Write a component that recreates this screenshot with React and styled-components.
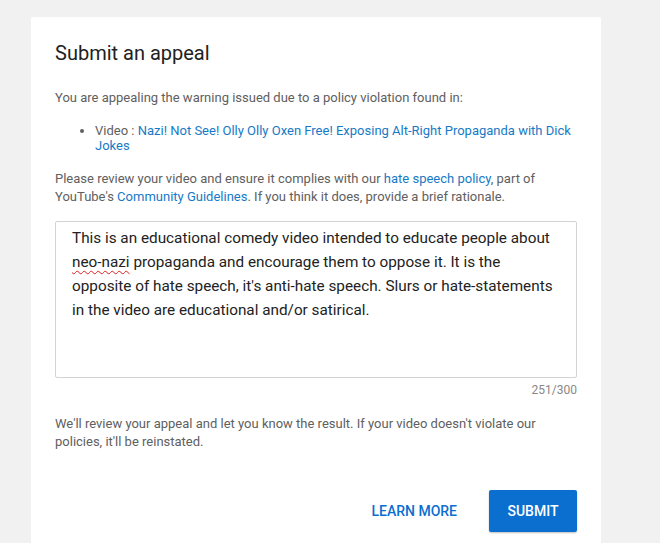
import React from "react";
import styled, { createGlobalStyle } from "styled-components";

const Global = createGlobalStyle`
  html, body { margin: 0; padding: 0; background: #f1f1f1; }
  body { font-family: Roboto, "Noto Sans", Arial, sans-serif; }
`;

const Page = styled.div`
  padding: 17px 59px 0 31px;
  min-height: 543px;
  box-sizing: border-box;
`;

const Card = styled.div`
  width: 570px;
  box-sizing: border-box;
  background: #fff;
  border-radius: 2px 2px 0 0;
  padding: 24px 24px 40px;
`;

const Title = styled.h2`
  margin: 0;
  font-size: 20px;
  line-height: 24px;
  font-weight: 400;
  color: #212121;
`;

const Para = styled.p`
  margin: ${(p) => p.$mt || 0}px 0 0;
  font-size: 13px;
  line-height: 18px;
  color: #606060;
`;

const List = styled.ul`
  margin: 16px 0 0;
  padding-left: 40px;
  font-size: 13px;
  line-height: 15px;
  color: #606060;
  li::marker { color: #606060; }
`;

const Link = styled.a`
  color: #167ac6;
  text-decoration: none;
`;

const Field = styled.div`
  margin-top: 15px;
  height: 157px;
  box-sizing: border-box;
  border: 1px solid #d3d3d3;
  border-radius: 2px;
  padding: 4px 16px;
  font-size: 15.3px;
  line-height: 24px;
  color: #222;
`;

const Misspelled = styled.span`
  text-decoration: underline wavy #e02020;
  text-decoration-thickness: 1px;
  text-underline-offset: 3px;
`;

const Counter = styled.div`
  margin-top: 4px;
  text-align: right;
  font-size: 12px;
  line-height: 16px;
  color: #888;
`;

const Actions = styled.div`
  margin-top: 39px;
  display: flex;
  justify-content: flex-end;
  align-items: center;
  gap: 16px;
`;

const Button = styled.button`
  height: 42px;
  min-width: 88px;
  padding: 0 ${(p) => (p.$primary ? 18 : 16)}px;
  border: none;
  border-radius: 2px;
  font-family: Roboto, "Noto Sans", Arial, sans-serif;
  font-size: 14px;
  font-weight: 500;
  letter-spacing: 0;
  text-transform: uppercase;
  cursor: pointer;
  background: ${(p) => (p.$primary ? "#0b6fd0" : "transparent")};
  color: ${(p) => (p.$primary ? "#fff" : "#0b6fd0")};
  box-shadow: ${(p) => (p.$primary ? "0 1px 2px rgba(0,0,0,0.25)" : "none")};
`;

export default function App() {
  return (
    <>
      <Global />
      <Page>
        <Card>
          <Title>Submit an appeal</Title>
          <Para $mt={24}>
            You are appealing the warning issued due to a policy violation found in:
          </Para>
          <List>
            <li>
              Video :{" "}
              <Link href="#">
                Nazi! Not See! Olly Olly Oxen Free! Exposing Alt-Right Propaganda with Dick Jokes
              </Link>
            </li>
          </List>
          <Para $mt={17}>
            Please review your video and ensure it complies with our{" "}
            <Link href="#">hate speech policy</Link>, part of YouTube's{" "}
            <Link href="#">Community Guidelines</Link>. If you think it does, provide a brief
            rationale.
          </Para>
          <Field>
            This is an educational comedy video intended to educate people about{" "}
            <Misspelled>neo-nazi</Misspelled> propaganda and encourage them to oppose it. It is
            the opposite of hate speech, it's anti-hate speech. Slurs or hate-statements in the
            video are educational and/or satirical.
          </Field>
          <Counter>251/300</Counter>
          <Para $mt={17}>
            We'll review your appeal and let you know the result. If your video doesn't violate
            our policies, it'll be reinstated.
          </Para>
          <Actions>
            <Button>Learn more</Button>
            <Button $primary>Submit</Button>
          </Actions>
        </Card>
      </Page>
    </>
  );
}
